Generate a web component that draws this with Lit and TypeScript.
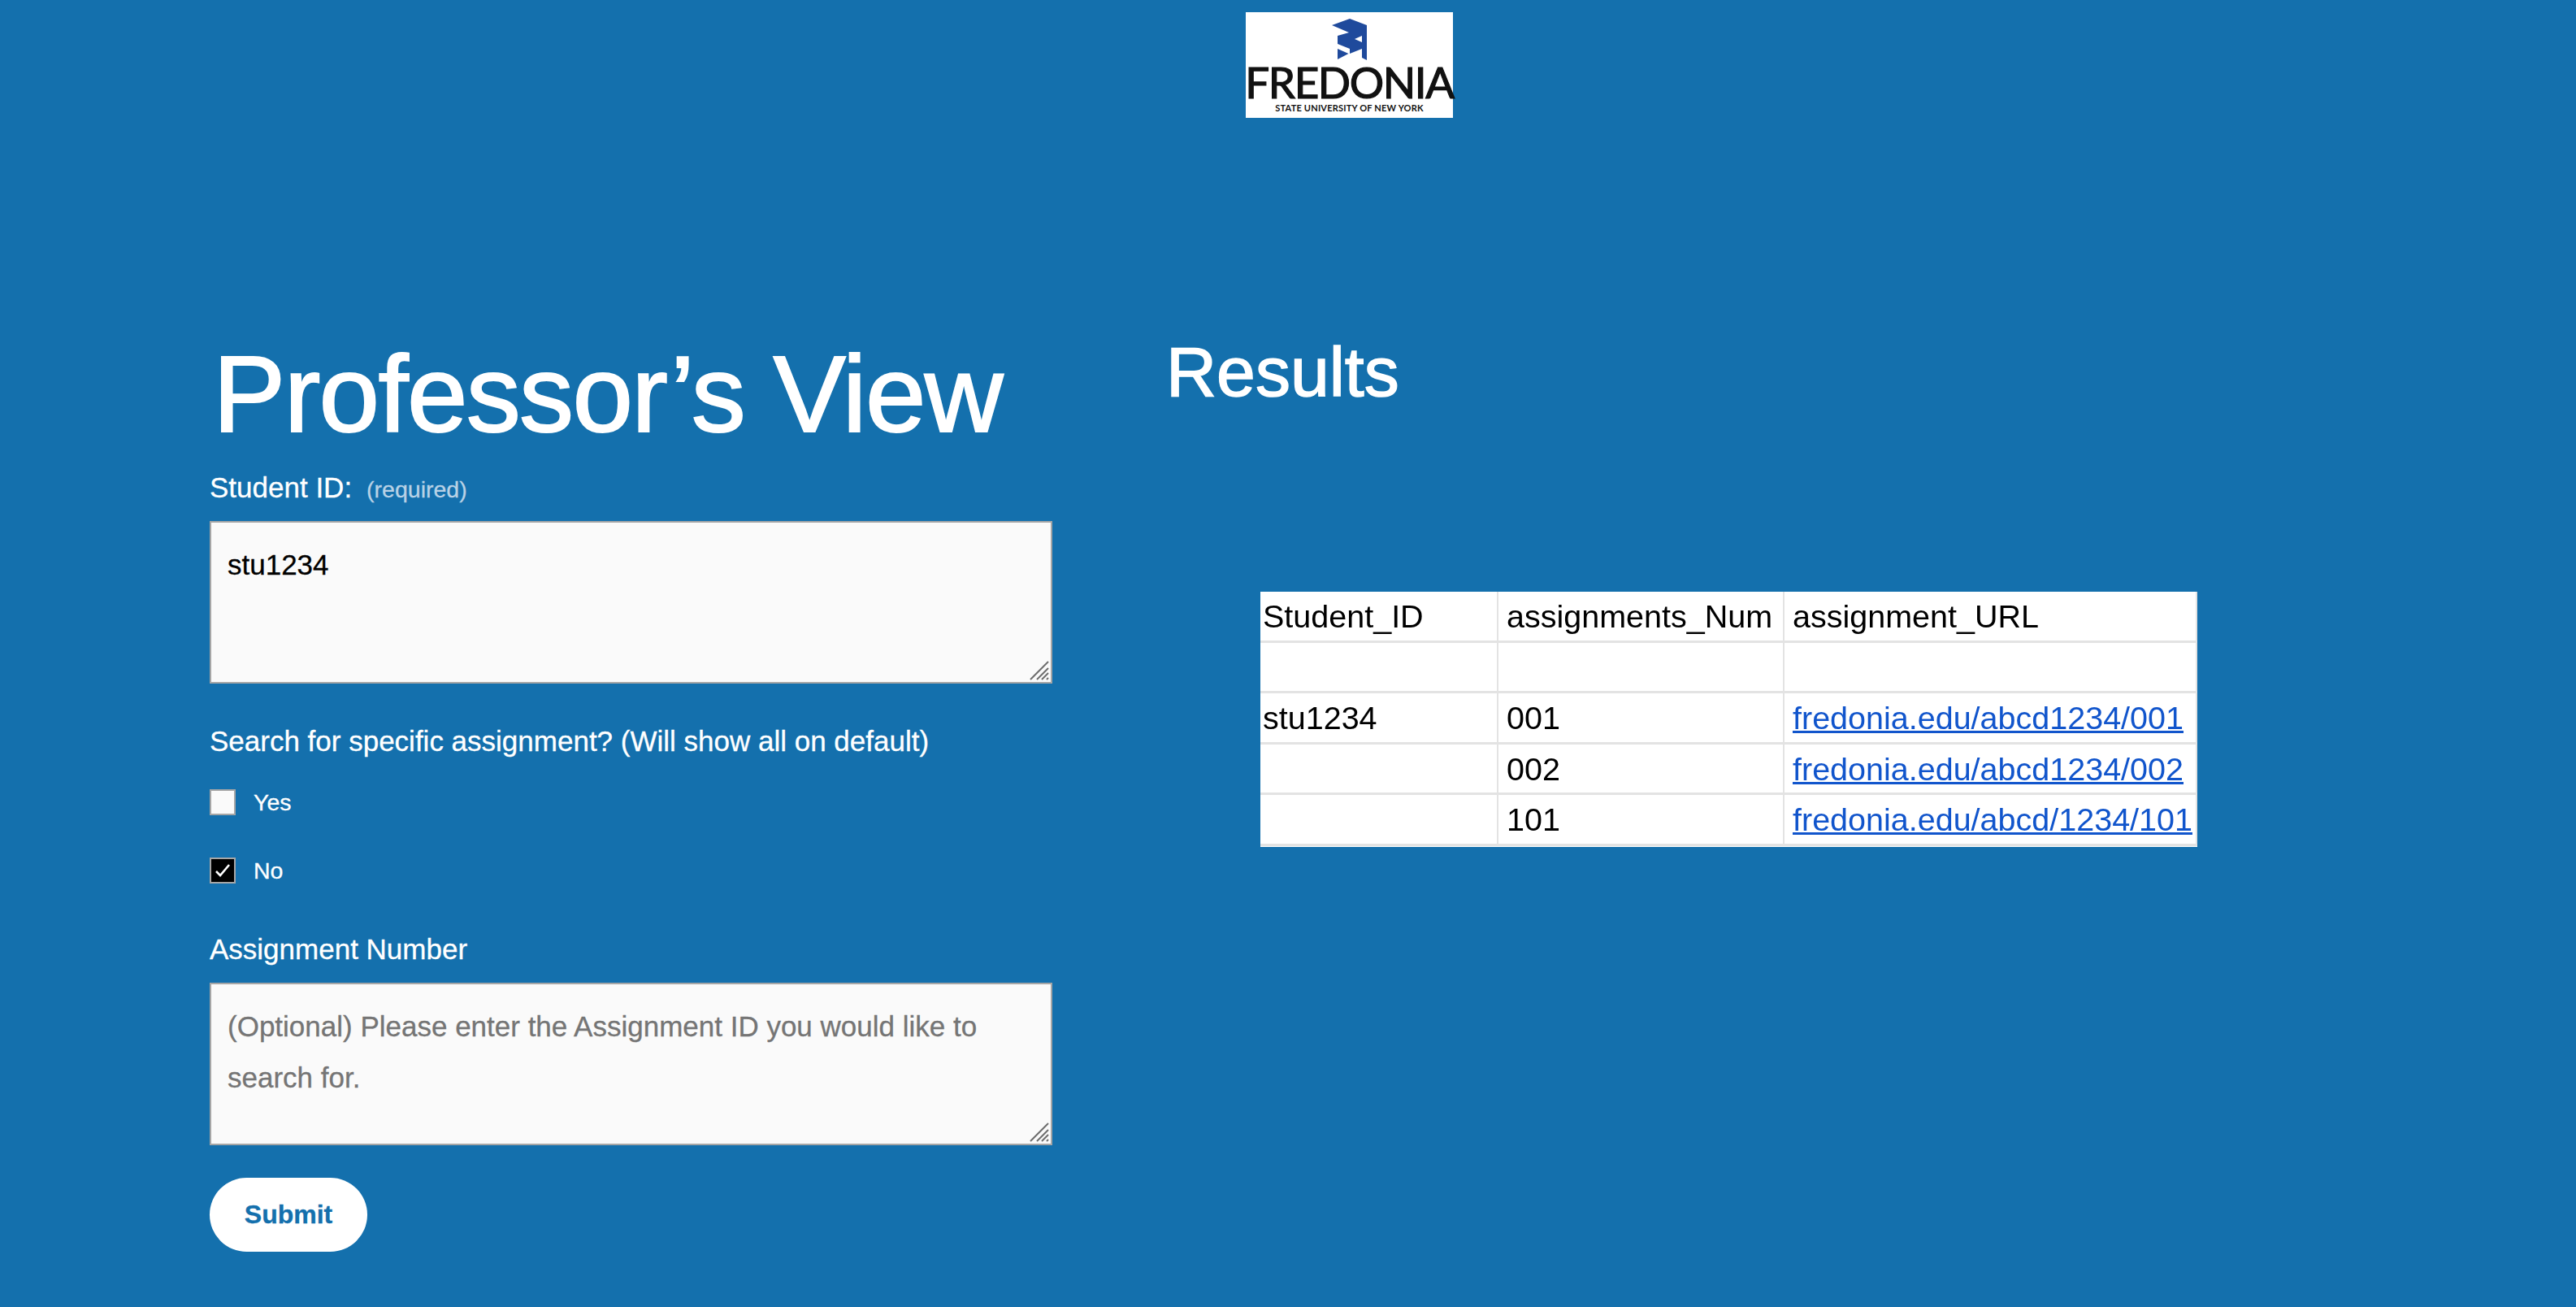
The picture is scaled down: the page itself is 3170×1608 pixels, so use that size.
import { LitElement, html, css } from 'lit';
import { customElement } from 'lit/decorators.js';

const rows = [
  ['', '', ''],
  ['stu1234', '001', 'fredonia.edu/abcd1234/001'],
  ['', '002', 'fredonia.edu/abcd1234/002'],
  ['', '101', 'fredonia.edu/abcd/1234/101'],
];

@customElement('app-root')
export class AppRoot extends LitElement {
  static styles = css`
    :host {
      display: block;
      width: 3170px;
      height: 1608px;
      overflow: hidden;
      background: #1470ad;
      color: #fff;
      font-family: 'Liberation Sans', Arial, sans-serif;
      -webkit-text-stroke: 0.3px currentColor;
    }

    /* logo */
    .logo {
      box-sizing: border-box;
      width: 255px;
      height: 130px;
      margin: 15px 0 0 1533px;
      background: #fff;
      display: flex;
      flex-direction: column;
      align-items: center;
      color: #111;
    }
    .logo svg { display: block; margin-top: 8px; }
    .logo .name {
      font-family: Lato, sans-serif;
      font-size: 53px;
      line-height: 40px;
      font-weight: 400;
      letter-spacing: -1.4px;
      -webkit-text-stroke: 1.2px #111;
      margin-top: 7px;
    }
    .logo .sub {
      font-family: Lato, sans-serif;
      font-size: 11px;
      line-height: 12px;
      font-weight: 700;
      letter-spacing: 0.2px;
      -webkit-text-stroke: 0;
      margin-top: 6px;
    }

    .main {
      display: flex;
      margin-top: 262px;
      padding-left: 258px;
    }

    /* left column */
    .form { width: 1037px; flex: none; }
    h1 {
      margin: 4px 0 0 4px;
      font-size: 134px;
      line-height: 148px;
      font-weight: 400;
      letter-spacing: -1.7px;
      -webkit-text-stroke: 2px #fff;
      white-space: nowrap;
    }
    .label { font-size: 35px; line-height: 40px; }
    .student { margin-top: 21px; display: flex; align-items: baseline; gap: 18px; }
    .student small { font-size: 28.5px; color: #b9d2e6; }
    .box {
      position: relative;
      box-sizing: border-box;
      width: 1037px;
      height: 200px;
      margin-top: 19px;
      padding: 28px 20px;
      background: #fafafa;
      border: 2px solid #a6a6a6;
      font-size: 35px;
      line-height: 63px;
      color: #000;
    }
    .box.empty { color: #757575; margin-top: 21px; }
    .box svg { position: absolute; right: 2px; bottom: 2px; }
    .box .value { display: block; margin-top: -8px; }

    .search { margin-top: 51px; }
    .check {
      display: flex;
      align-items: center;
      gap: 22px;
      height: 32px;
      font-size: 28.5px;
    }
    .first { margin-top: 39px; }
    .second { margin-top: 52px; }
    .tick {
      box-sizing: border-box;
      width: 32px;
      height: 32px;
      background: #fafafa;
      border: 2px solid #a6a6a6;
      display: flex;
      align-items: center;
      justify-content: center;
    }
    .tick.on { background: #000; }
    .number { margin-top: 61px; }

    button {
      display: block;
      width: 194px;
      height: 91px;
      margin-top: 40px;
      padding: 0;
      border: 0;
      border-radius: 46px;
      background: #fff;
      color: #1470ad;
      font-family: inherit;
      font-size: 32px;
      font-weight: 700;
    }

    /* right column */
    .results { margin-left: 140px; }
    h2 {
      margin: 4px 0 0;
      font-size: 86px;
      line-height: 92px;
      font-weight: 400;
      -webkit-text-stroke: 1.5px #fff;
    }
    .sheet {
      display: grid;
      grid-template-columns: 293px 352px 508px;
      grid-auto-rows: 62.5px;
      width: 1153px;
      height: 314px;
      margin: 225px 0 0 116px;
      background: #fff;
      color: #000;
      font-size: 39.5px;
      -webkit-text-stroke: 0;
      overflow: hidden;
      filter: blur(0.5px);
    }
    .cell {
      box-sizing: border-box;
      padding: 0 0 0 3px;
      line-height: 60px;
      border-right: 2px solid #e3e3e3;
      border-bottom: 3px solid #e3e3e3;
      white-space: nowrap;
    }
    .cell.num { padding-left: 10px; }
    .cell.url { padding-left: 10px; }
    a { color: #1155cc; text-decoration: underline; }
  `;

  private grip() {
    return html`<svg width="24" height="24" viewBox="0 0 24 24" stroke="#6e6e6e" stroke-width="2" fill="none">
      <path d="M1 23 23 1M9 23 23 9M15 23 23 15M21 23 23 21" />
    </svg>`;
  }

  render() {
    return html`
      <div class="logo">
        <svg width="43" height="51" viewBox="0 0 43 51">
          <path fill="#1f4a9c" d="M0 8 21 17 7 21V31L22 37V43L37 37V48L43 51V8L22 0Z" />
          <path fill="#1f4a9c" d="M7 37 20.5 43 7 50Z" />
          <path fill="#fff" d="M37 21V29L28 25Z" />
        </svg>
        <div class="name">FREDONIA</div>
        <div class="sub">STATE UNIVERSITY OF NEW YORK</div>
      </div>
      <div class="main">
        <section class="form">
          <h1>Professor’s View</h1>
          <div class="label student">Student ID: <small>(required)</small></div>
          <div class="box"><span class="value">stu1234</span>${this.grip()}</div>
          <div class="label search">Search for specific assignment? (Will show all on default)</div>
          <div class="check first"><span class="tick"></span>Yes</div>
          <div class="check second">
            <span class="tick on">
              <svg width="20" height="18" viewBox="0 0 20 18" fill="none" stroke="#fff" stroke-width="2.6">
                <path d="M2 10 7 15 18 2" />
              </svg>
            </span>No
          </div>
          <div class="label number">Assignment Number</div>
          <div class="box empty">
            <span class="value">(Optional) Please enter the Assignment ID you would like to search for.</span>${this.grip()}
          </div>
          <button>Submit</button>
        </section>
        <section class="results">
          <h2>Results</h2>
          <div class="sheet">
            <div class="cell">Student_ID</div>
            <div class="cell num">assignments_Num</div>
            <div class="cell url">assignment_URL</div>
            ${rows.map(
              ([id, num, url]) => html`
                <div class="cell">${id}</div>
                <div class="cell num">${num}</div>
                <div class="cell url">${url ? html`<a href="#">${url}</a>` : ''}</div>
              `
            )}
          </div>
        </section>
      </div>
    `;
  }
}
